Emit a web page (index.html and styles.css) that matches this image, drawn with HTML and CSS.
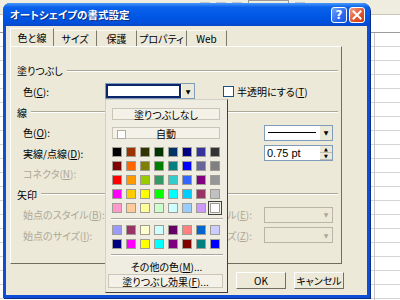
FILE: index.html
```html
<!DOCTYPE html>
<html lang="ja">
<head>
    <meta charset="UTF-8">
    <title>オートシェイプの書式設定</title>
    <link rel="stylesheet" href="styles.css">
</head>
<body>
<div class="desk">
    <div class="toolbar">
        <span class="tb-icon"></span><span class="tb-icon"></span><span class="tb-icon"></span>
        <span class="tb-zoom">100%</span><span class="tb-icon"></span>
    </div>
    <div class="formula"></div>
    <div class="sheet"></div>

    <div class="dialog">
        <div class="titlebar">
            <span class="title">オートシェイプの書式設定</span>
            <span class="cap-btn help">?</span>
            <span class="cap-btn close">
                <svg width="10" height="10" viewBox="0 0 10 10"><path d="M1.5 1.5 L8.5 8.5 M8.5 1.5 L1.5 8.5" stroke="#fff" stroke-width="2" stroke-linecap="square"/></svg>
            </span>
        </div>
        <div class="body">
            <div class="tabs">
                <span class="tab active">色と線</span>
                <span class="tab w43">サイズ</span>
                <span class="tab w40">保護</span>
                <span class="tab w50">プロパティ</span>
                <span class="tab w40">Web</span>
            </div>
            <div class="panel">
                <div class="group-head"><span>塗りつぶし</span><i class="rule"></i></div>
                <div class="row">
                    <span class="lbl">色(<u>C</u>):</span>
                    <span class="combo focus"><span class="field"></span><span class="arrow">▼</span></span>
                    <span class="check"></span><span>半透明にする(<u>T</u>)</span>
                </div>
                <div class="group-head"><span>線</span><i class="rule"></i></div>
                <div class="row">
                    <span class="lbl wide">色(<u>O</u>):</span>
                    <span class="combo right"><span class="field"><i class="line-sample"></i></span><span class="arrow">▼</span></span>
                </div>
                <div class="row">
                    <span class="lbl wide">実線/点線(<u>D</u>):</span>
                    <span class="combo right"><span class="field text">0.75 pt</span><span class="spin"><i>▲</i><i>▼</i></span></span>
                </div>
                <div class="row off">
                    <span class="lbl wide">コネクタ(<u>N</u>):</span>
                </div>
                <div class="group-head"><span>矢印</span><i class="rule"></i></div>
                <div class="row off">
                    <span class="lbl wide">始点のスタイル(<u>B</u>):</span>
                    <span class="rlbl">終点のスタイル(<u>E</u>):</span>
                    <span class="combo right disabled"><span class="field"></span><span class="arrow">▼</span></span>
                </div>
                <div class="row off">
                    <span class="lbl wide">始点のサイズ(<u>I</u>):</span>
                    <span class="rlbl">終点のサイズ(<u>Z</u>):</span>
                    <span class="combo right disabled"><span class="field"></span><span class="arrow">▼</span></span>
                </div>
            </div>
            <div class="buttons">
                <span class="btn">OK</span>
                <span class="btn">キャンセル</span>
            </div>
        </div>

        <!-- カラーパレット (ドロップダウン) -->
        <div class="popup">
            <span class="pbtn">塗りつぶしなし</span>
            <span class="pbtn auto"><i class="auto-box"></i>自動</span>
            <div class="swatches">
                <i style="background:#000000"></i><i style="background:#993300"></i><i style="background:#333300"></i><i style="background:#003300"></i><i style="background:#003366"></i><i style="background:#000080"></i><i style="background:#333399"></i><i style="background:#333333"></i>
                <i style="background:#800000"></i><i style="background:#ff6600"></i><i style="background:#808000"></i><i style="background:#008000"></i><i style="background:#008080"></i><i style="background:#0000ff"></i><i style="background:#666699"></i><i style="background:#808080"></i>
                <i style="background:#ff0000"></i><i style="background:#ff9900"></i><i style="background:#99cc00"></i><i style="background:#339966"></i><i style="background:#33cccc"></i><i style="background:#3366ff"></i><i style="background:#800080"></i><i style="background:#969696"></i>
                <i style="background:#ff00ff"></i><i style="background:#ffcc00"></i><i style="background:#ffff00"></i><i style="background:#00ff00"></i><i style="background:#00ffff"></i><i style="background:#00ccff"></i><i style="background:#993366"></i><i style="background:#c0c0c0"></i>
                <i style="background:#ff99cc"></i><i style="background:#ffcc99"></i><i style="background:#ffff99"></i><i style="background:#ccffcc"></i><i style="background:#ccffff"></i><i style="background:#99ccff"></i><i style="background:#cc99ff"></i><i class="sel" style="background:#ffffff"></i>
            </div>
            <div class="psep"></div>
            <div class="swatches">
                <i style="background:#9999ff"></i><i style="background:#993366"></i><i style="background:#ffffcc"></i><i style="background:#ccffff"></i><i style="background:#660066"></i><i style="background:#ff8080"></i><i style="background:#0066cc"></i><i style="background:#ccccff"></i>
                <i style="background:#000080"></i><i style="background:#ff00ff"></i><i style="background:#ffff00"></i><i style="background:#00ffff"></i><i style="background:#800080"></i><i style="background:#800000"></i><i style="background:#008080"></i><i style="background:#0000ff"></i>
            </div>
            <div class="psep"></div>
            <div class="more">その他の色(<u>M</u>)...</div>
            <span class="pbtn effect">塗りつぶし効果(<u>F</u>)...</span>
        </div>
    </div>
</div>
</body>
</html>
```

FILE: styles.css
```css
body {
    margin: 0;
    font-family: "Noto Sans CJK JP", "DejaVu Sans", sans-serif;
    font-size: 10px;
    font-feature-settings: "palt";
    color: #000;
}
u {
    text-decoration-thickness: 1px;
    text-underline-offset: 1px;
}
.desk {
    position: relative;
    width: 400px;
    height: 300px;
    overflow: hidden;
    background: #fff;
}

/* 後ろの Excel */
.toolbar {
    height: 14px;
    background: #efede0;
    border-bottom: 1px solid #c9c6b6;
    display: flex;
    align-items: center;
    gap: 6px;
    padding-left: 200px;
}
.tb-icon {
    width: 10px;
    height: 10px;
    background: #b8c4d8;
}
.tb-zoom {
    font-size: 9px;
    color: #444;
    border: 1px solid #9a9a9a;
    padding: 0 8px;
}
.formula {
    height: 17px;
    border-bottom: 1px solid #9c9c9c;
}
.sheet {
    height: 268px;
    background:
        linear-gradient(to right, transparent 374px, #c6c6c6 374px, #c6c6c6 375px, transparent 375px),
        repeating-linear-gradient(to bottom, transparent 0, transparent 13px, #d4d4d4 13px, #d4d4d4 14px);
}

/* ダイアログ */
.dialog {
    position: absolute;
    left: 3px;
    top: 3px;
    width: 367px;
    height: 295px;
    background: #0c4fd6;
    border-radius: 7px 7px 0 0;
    display: flex;
    flex-direction: column;
    box-shadow: 1px 1px 0 #0a2d8a;
}
.titlebar {
    height: 23px;
    display: flex;
    align-items: center;
    padding: 0 5px 0 7px;
    border-radius: 7px 7px 0 0;
    background: linear-gradient(#4a98fb, #0a62ea 18%, #0058e6 55%, #0050dc 85%, #0a47c8);
}
.title {
    flex: 1;
    color: #fff;
    font-weight: bold;
    font-size: 10.5px;
    text-shadow: 1px 1px 0 #0a2a80;
}
.cap-btn {
    width: 16px;
    height: 16px;
    box-sizing: border-box;
    border: 1px solid #fff;
    border-radius: 3px;
    display: flex;
    align-items: center;
    justify-content: center;
    color: #fff;
    font-family: "DejaVu Sans", sans-serif;
    font-weight: bold;
    font-size: 12px;
}
.help {
    background: linear-gradient(135deg, #72a6f8, #2a6af0 60%, #1c58e0);
    margin-right: 2px;
}
.close {
    background: linear-gradient(135deg, #f0a088, #e2572f 55%, #c83a16);
}

.body {
    flex: 1;
    margin: 0 3px 3px;
    background: #ece9d8;
    position: relative;
    padding: 2px 0 0 4px;
}
.tabs {
    display: flex;
    align-items: flex-end;
    height: 18px;
}
.tab {
    height: 16px;
    box-sizing: border-box;
    width: 44px;
    display: flex;
    align-items: center;
    justify-content: center;
    border-top: 1px solid #fbfaf5;
    border-right: 1px solid #7d7a6e;
}
.tab.active {
    height: 18px;
    border-left: 1px solid #fff;
    padding-bottom: 1px;
}
.w43 { width: 43px; }
.w40 { width: 40px; }
.w50 { width: 50px; }

.panel {
    width: 332px;
    height: 218px;
    box-sizing: border-box;
    border: 1px solid;
    border-color: #fff #6f6c60 #6f6c60 #fff;
    padding: 14px 3px 0 6px;
    display: grid;
    grid-template-rows: 19px 22px 20px 21px 20px 21px 20px 21px 20px;
    align-content: start;
}
.group-head {
    display: flex;
    align-items: center;
}
.rule {
    flex: 1;
    margin-left: 4px;
    border-top: 1px solid #aca899;
    border-bottom: 1px solid #fff;
}
.row {
    display: flex;
    align-items: center;
    padding-left: 6px;
}
.row.off {
    color: #aca899;
}
.lbl {
    width: 82px;
}
.lbl.wide {
    flex: 1;
}
.rlbl {
    margin-right: 12px;
}

.combo {
    display: flex;
    width: 90px;
    height: 16px;
    box-sizing: border-box;
    border: 1px solid #7f9db9;
    background: #fff;
}
.combo.focus .field {
    box-shadow: inset 0 0 0 2px #0c246a;
}
.combo.right {
    width: 69px;
    margin-right: 5px;
}
.field {
    flex: 1;
    background: #fff;
    display: flex;
    align-items: center;
}
.field.text {
    padding-left: 2px;
    font-family: "Liberation Sans", sans-serif;
    font-size: 11px;
}
.line-sample {
    flex: 1;
    margin: 0 3px;
    border-top: 1px solid #000;
}
.arrow {
    width: 12px;
    background: #ece9d8;
    border-left: 1px solid #fff;
    font-size: 6px;
    display: flex;
    align-items: center;
    justify-content: center;
    font-family: "DejaVu Sans", sans-serif;
}
.spin {
    width: 12px;
    display: flex;
    flex-direction: column;
    background: #ece9d8;
    font-family: "DejaVu Sans", sans-serif;
    font-size: 5px;
}
.spin i {
    flex: 1;
    font-style: normal;
    display: flex;
    align-items: center;
    justify-content: center;
    border-bottom: 1px solid #c0bdb0;
}
.combo.disabled {
    border-color: #b8b5a6;
    background: #ece9d8;
}
.combo.disabled .field {
    background: #ece9d8;
}
.combo.disabled .arrow {
    color: #aca899;
    border-left: none;
}
.check {
    width: 11px;
    height: 11px;
    box-sizing: border-box;
    border: 1px solid #1c5180;
    background: #fff;
    margin: 0 3px 0 28px;
}

.buttons {
    display: flex;
    gap: 8px;
    padding: 8px 0 0 226px;
}
.btn {
    width: 50px;
    height: 17px;
    box-sizing: border-box;
    border: 1px solid;
    border-color: #fff #716f64 #716f64 #fff;
    display: flex;
    align-items: center;
    justify-content: center;
}

/* カラーパレット */
.popup {
    position: absolute;
    left: 102px;
    top: 96px;
    width: 123px;
    height: 194px;
    box-sizing: border-box;
    background: #efede2;
    border: 1px solid;
    border-color: #d4d0c8 #404040 #404040 #d4d0c8;
    display: flex;
    flex-direction: column;
    align-items: flex-start;
}
.pbtn {
    width: 108px;
    height: 12px;
    margin: 8px 0 0 6px;
    box-sizing: border-box;
    border: 1px solid #c9c6b8;
    background: #f3f1e8;
    display: flex;
    align-items: center;
    justify-content: center;
    position: relative;
}
.pbtn.auto {
    margin-top: 7px;
}
.auto-box {
    position: absolute;
    left: 4px;
    top: 2px;
    width: 7px;
    height: 7px;
    border: 1px solid #b0ad9e;
    background: #fff;
}
.swatches {
    display: grid;
    grid-template-columns: repeat(8, 14px);
    grid-auto-rows: 14px;
    margin: 6px 0 0 4px;
}
.swatches i {
    width: 10px;
    height: 10px;
    margin: 2px;
    box-sizing: border-box;
    border: 1px solid #a09e94;
}
.swatches i.sel {
    outline: 1px solid #404040;
    outline-offset: 1px;
}
.psep {
    width: 112px;
    margin: 3px 0 0 5px;
    border-top: 1px solid #aca899;
    border-bottom: 1px solid #fff;
}
.psep + .swatches {
    margin-top: 3px;
}
.more {
    width: 100%;
    height: 16px;
    margin-top: 2px;
    display: flex;
    align-items: center;
    justify-content: center;
}
.pbtn.effect {
    width: 115px;
    height: 14px;
    margin: 0 0 0 2px;
}
```
